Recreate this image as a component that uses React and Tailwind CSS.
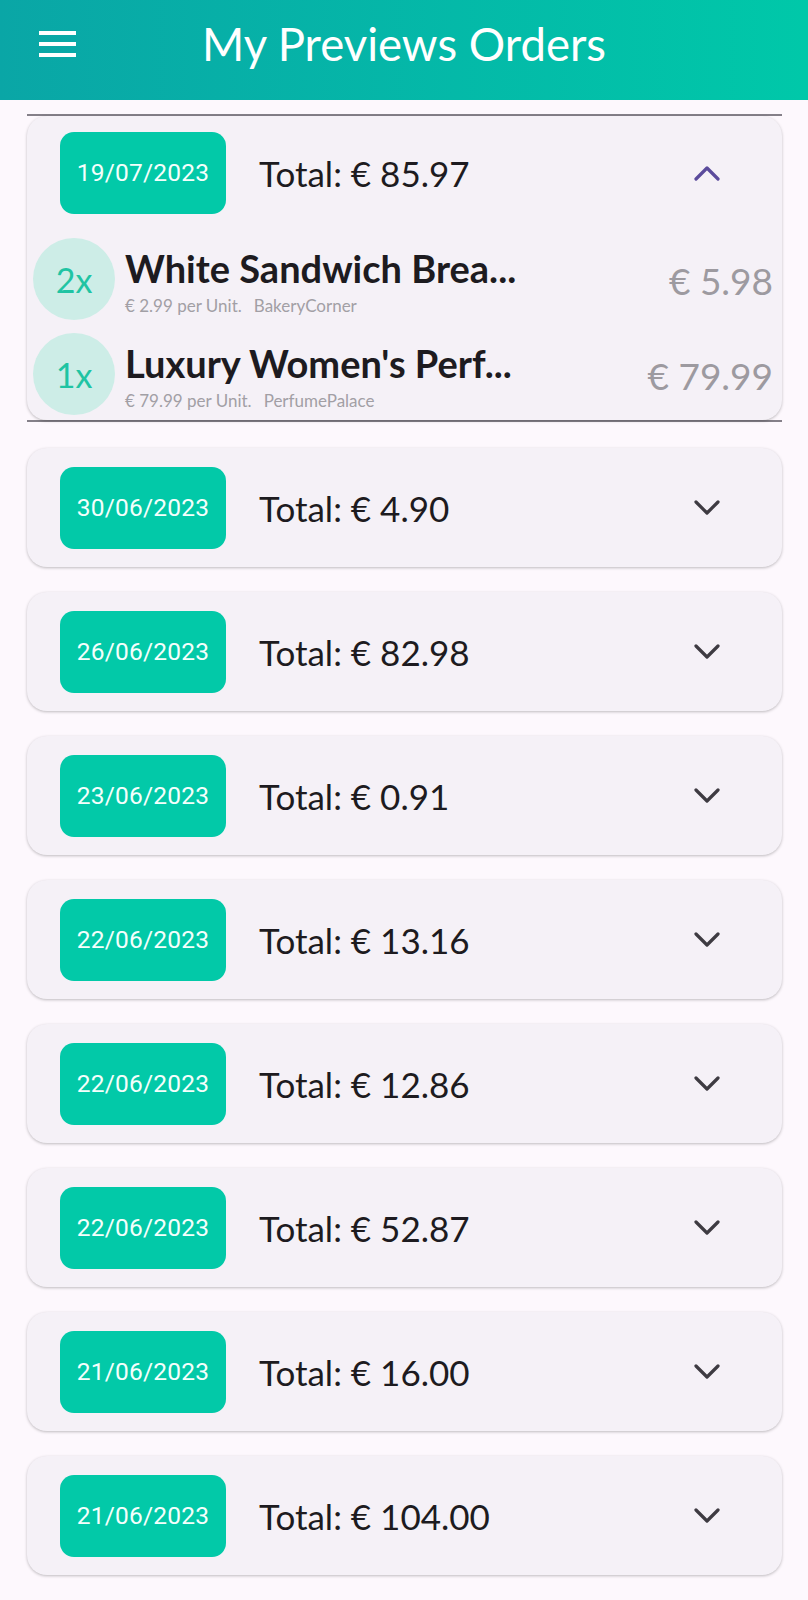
import React from "react";

const orders = [
  { date: "30/06/2023", total: "€ 4.90" },
  { date: "26/06/2023", total: "€ 82.98" },
  { date: "23/06/2023", total: "€ 0.91" },
  { date: "22/06/2023", total: "€ 13.16" },
  { date: "22/06/2023", total: "€ 12.86" },
  { date: "22/06/2023", total: "€ 52.87" },
  { date: "21/06/2023", total: "€ 16.00" },
  { date: "21/06/2023", total: "€ 104.00" },
];

const items = [
  { qty: "2x", name: "White Sandwich Brea...", unit: "€ 2.99 per Unit.", shop: "BakeryCorner", price: "€ 5.98", h: "h-[95px]" },
  { qty: "1x", name: "Luxury Women's Perf...", unit: "€ 79.99 per Unit.", shop: "PerfumePalace", price: "€ 79.99", h: "h-[82px]" },
];

function Chevron({ up }) {
  return (
    <svg width="26" height="16" viewBox="0 0 26 16" className="block">
      {up ? (
        <polyline points="2,14 13,3 24,14" fill="none" stroke="#5b4b9c" strokeWidth="3.2" strokeLinecap="round" strokeLinejoin="round" />
      ) : (
        <polyline points="2,2 13,13 24,2" fill="none" stroke="#3e3b42" strokeWidth="3.2" strokeLinecap="round" strokeLinejoin="round" />
      )}
    </svg>
  );
}

function HeaderRow({ date, total, up }) {
  return (
    <div className="flex items-center h-[82px]">
      <div className="ml-[33px] w-[166px] h-[82px] rounded-[14px] bg-[#02c9a8] flex items-center justify-center text-[#f4fffc] text-[24.5px] font-['Roboto',sans-serif] tracking-[0.2px]">
        {date}
      </div>
      <div className="ml-[33px] flex-1 text-[35px] leading-none text-[#1d1b20] font-['Lato',sans-serif]">
        Total: {total}
      </div>
      <div className="mr-[62px]">
        <Chevron up={up} />
      </div>
    </div>
  );
}

export default function App() {
  return (
    <div className="min-h-[1600px] w-[808px] bg-[#fdf8fd] font-['Lato',sans-serif]">
      <header className="h-[100px] bg-gradient-to-r from-[#0aa6a6] to-[#00c8a9] flex items-center pb-[12px] relative">
        <div className="ml-[39px] w-[37px] flex flex-col gap-[7px]">
          <div className="h-[4px] bg-white" />
          <div className="h-[4px] bg-white" />
          <div className="h-[4px] bg-white" />
        </div>
        <h1 className="absolute left-0 right-0 top-[15px] text-center text-white text-[45.5px] leading-[58px] font-['Lato',sans-serif] pointer-events-none">
          My Previews Orders
        </h1>
      </header>

      <div className="ml-[27px] mr-[26px] mt-[14px] border-y-2 border-[#858089]">
        <div className="rounded-[20px] bg-[#f5f1f7] shadow-[0_1px_3px_rgba(0,0,0,0.25)] pt-[16px] pb-[5px]">
          <HeaderRow date="19/07/2023" total="€ 85.97" up />
          <div className="mt-[24px]">
            {items.map((it) => (
              <div key={it.qty} className={`flex items-start ${it.h}`}>
                <div className="ml-[6px] w-[82px] h-[82px] rounded-full bg-[#cdede7] flex items-center justify-center text-[#1fc4a3] text-[34px] shrink-0">
                  {it.qty}
                </div>
                <div className="ml-[10px] flex-1 min-w-0">
                  <div className="mt-[8px] text-[38px] leading-[44px] font-bold text-[#1d1b20] whitespace-nowrap">
                    {it.name}
                  </div>
                  <div className="mt-[6px] text-[17px] leading-[20px] text-[#a29fa5] whitespace-nowrap flex">
                    <span>{it.unit}</span>
                    <span className="ml-[12px]">{it.shop}</span>
                  </div>
                </div>
                <div className="mt-[21px] mr-[9px] text-[37px] leading-[44px] text-[#9d9aa0]">
                  {it.price}
                </div>
              </div>
            ))}
          </div>
        </div>
      </div>

      <div className="ml-[27px] mr-[26px] mt-[26px] flex flex-col gap-[25px]">
        {orders.map((o, i) => (
          <div key={i} className="h-[119px] rounded-[20px] bg-[#f5f1f7] shadow-[0_1px_3px_rgba(0,0,0,0.25)] pt-[19px]">
            <HeaderRow date={o.date} total={o.total} />
          </div>
        ))}
      </div>
    </div>
  );
}
